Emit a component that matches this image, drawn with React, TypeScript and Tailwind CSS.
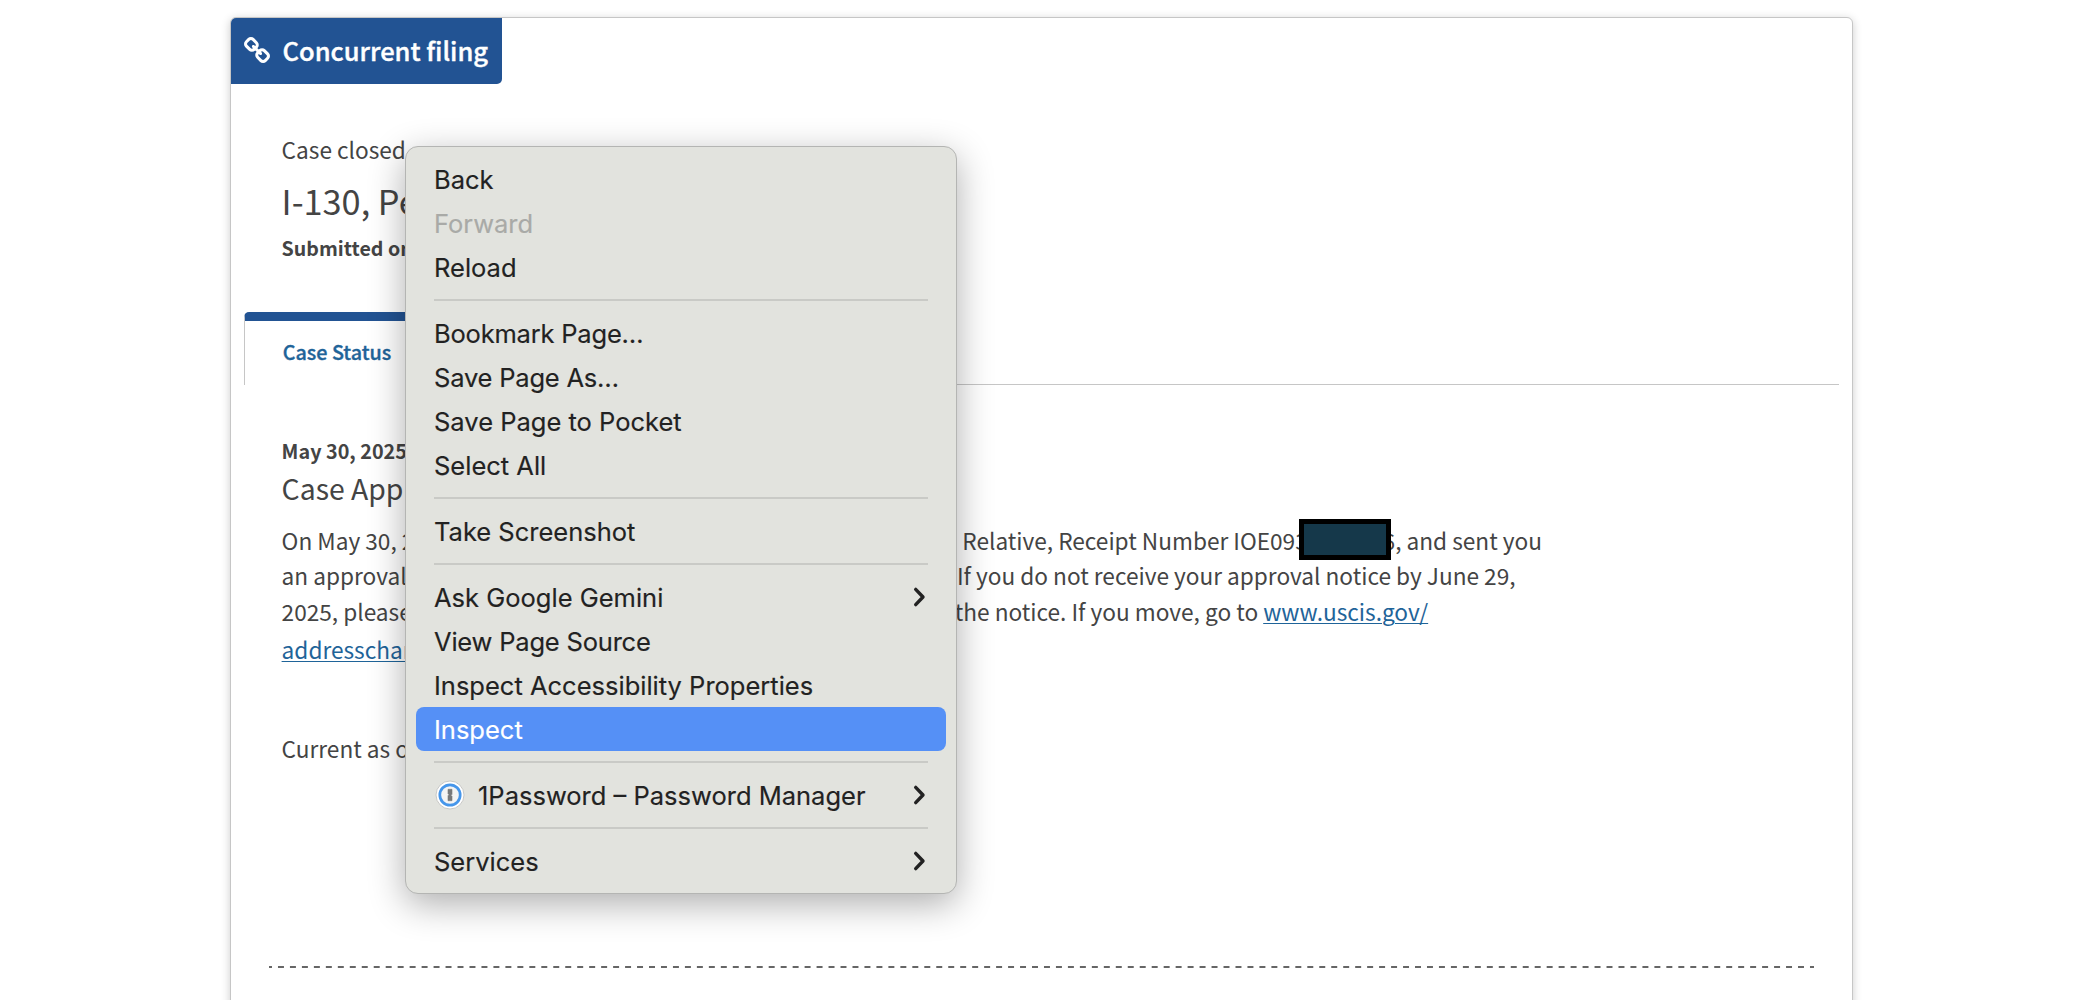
import React from "react";

type Item = {
  label: string;
  disabled?: boolean;
  active?: boolean;
  submenu?: boolean;
  icon?: boolean;
  tight?: boolean;
};

const groups: Item[][] = [
  [{ label: "Back" }, { label: "Forward", disabled: true }, { label: "Reload" }],
  [
    { label: "Bookmark Page…", tight: true },
    { label: "Save Page As…", tight: true },
    { label: "Save Page to Pocket" },
    { label: "Select All" },
  ],
  [{ label: "Take Screenshot" }],
  [
    { label: "Ask Google Gemini", submenu: true },
    { label: "View Page Source", tight: true },
    { label: "Inspect Accessibility Properties" },
    { label: "Inspect", active: true },
  ],
  [{ label: "1Password – Password Manager", submenu: true, icon: true }],
  [{ label: "Services", submenu: true }],
];

function LinkIcon() {
  return (
    <svg className="mb-[2px]" width="26" height="26" viewBox="16 16 1632 1632" fill="white">
      <path d="M1456 1216q0-40-28-68l-208-208q-28-28-68-28-42 0-72 32 3 3 19 18.5t21.5 21.5 15 19 13 25.5 3.5 27.5q0 40-28 68t-68 28q-15 0-27.5-3.5t-25.5-13-19-15-21.5-21.5-18.5-19q-33 31-33 73 0 40 28 68l206 207q27 27 68 27 40 0 68-26l147-146q28-28 28-67zm-703-705q0-40-28-68l-206-207q-28-28-68-28-39 0-68 27l-147 146q-28 28-28 67 0 40 28 68l208 208q27 27 68 27 42 0 72-31-3-3-19-18.5t-21.5-21.5-15-19-13-25.5-3.5-27.5q0-40 28-68t68-28q15 0 27.5 3.5t25.5 13 19 15 21.5 21.5 18.5 19q33-31 33-73zm895 705q0 120-85 203l-147 146q-83 83-203 83-121 0-204-85l-206-207q-83-83-83-203 0-123 88-209l-88-88q-86 88-208 88-120 0-204-84l-208-208q-84-84-84-204t85-203l147-146q83-83 203-83 121 0 204 85l206 207q83 83 83 203 0 123-88 209l88 88q86-88 208-88 120 0 204 84l208 208q84 84 84 204z" />
    </svg>
  );
}

function Chevron() {
  return (
    <svg width="14" height="22" viewBox="0 0 14 22" fill="none" stroke="#222" strokeWidth="3.4" strokeLinecap="round" strokeLinejoin="round">
      <path d="M2.7 3.4L10 11l-7.3 7.6" />
    </svg>
  );
}

function OnePassword() {
  return (
    <svg width="30" height="30" viewBox="0 0 30 30">
      <circle cx="15" cy="15" r="14" fill="#fff" stroke="#c2c2c0" strokeWidth="0.9" />
      <circle cx="15" cy="15" r="10.2" fill="#f4f4f4" stroke="#4696ea" strokeWidth="2.7" />
      <path d="M13 9.3h4v5l-1 1 1 1v4.4h-4v-5l1-1-1-1z" fill="#77787a" stroke="#77787a" strokeWidth="0.6" strokeLinejoin="round" />
    </svg>
  );
}

function Row({ item }: { item: Item }) {
  const tone = item.active
    ? "bg-[#5590f6] text-white"
    : item.disabled
      ? "text-[#a9aaa7]"
      : "text-[#222]";
  return (
    <div className={`flex h-11 items-center rounded-[8px] pr-[19px] pl-[18px] ${tone}`}>
      {item.icon && (
        <span className="mr-[13px] ml-px">
          <OnePassword />
        </span>
      )}
      <span className={`grow pt-[2px] leading-[44px] whitespace-nowrap ${item.tight ? "tracking-[-0.2px]" : ""}`}>
        {item.label}
      </span>
      {item.submenu && <Chevron />}
    </div>
  );
}

function ContextMenu() {
  return (
    <div className="absolute top-[146px] left-[405px] w-[552px] rounded-[13px] border border-[#b4b5b3] bg-[#e2e3de] px-[10px] py-[10px] font-['Inter',sans-serif] text-[25.5px] shadow-[0_10px_36px_rgba(0,0,0,0.32)] [-webkit-text-stroke:0.15px]">
      {groups.map((group, i) => (
        <React.Fragment key={i}>
          {i > 0 && (
            <div className="flex h-[22px] items-center px-[18px]">
              <div className="h-[2px] w-full bg-[#c9cac6]" />
            </div>
          )}
          {group.map((item) => (
            <Row key={item.label} item={item} />
          ))}
        </React.Fragment>
      ))}
    </div>
  );
}

export default function App() {
  return (
    <div className="relative h-[1000px] w-[2082px] overflow-hidden bg-white pt-[17px] pl-[230px] font-['Noto_Sans_CJK_SC',sans-serif] whitespace-nowrap text-[#444]">
      <main className="h-[1010px] w-[1623px] rounded-[6px] border border-[#c6c6c6] bg-white shadow-[0_2px_10px_rgba(0,0,0,0.2)]">
        <div className="flex h-[66px] w-[271px] items-center rounded-tl-[5px] rounded-br-[5px] bg-[#225393] pl-[12.5px] text-white">
          <LinkIcon />
          <span className="ml-[13px] pb-[3px] text-[25.5px] leading-[63px] font-medium [-webkit-text-stroke:0.4px]">
            Concurrent filing
          </span>
        </div>

        <section className="pl-[50.6px]">
          <p className="mt-12 text-[22.65px] leading-9">Case closed</p>
          <h2 className="mt-[7px] text-[34.3px] leading-[50px]">I-130, Petition</h2>
          <p className="mt-[7px] text-[19.6px] leading-8 font-bold">Submitted on</p>
        </section>

        <nav className="mt-12 mr-[13px] ml-[13px] flex h-[73px] items-end">
          <div className="h-full w-[184px] rounded-t-[5px] border-t-[9px] border-l border-t-[#225393] border-l-[#c6c6c6] pt-[15px] pl-[37.7px] text-[19.75px] leading-8 font-medium text-[#1f6499] [-webkit-text-stroke:0.35px]">
            Case Status
          </div>
          <div className="h-px grow bg-[#c6c6c6]" />
        </nav>

        <section className="pl-[50.6px] text-[22.65px] leading-9">
          <p className="mt-[50px] text-[19.8px] leading-8 font-bold">May 30, 2025</p>
          <h3 className="mt-px text-[28.35px] leading-10">Case Approved</h3>
          <div className="mt-[15px] flex h-[35px]">
            <span className="w-[680.7px]">On May 30, 2025,</span>
            <span className="relative w-[420.3px]">
              Relative, Receipt Number IOE093
              <span className="absolute top-[-4px] left-[336.7px] h-[41px] w-[92px] border-[5px] border-black bg-[#15384a]" />
            </span>
            <span>6, and sent you</span>
          </div>
          <div className="flex h-9">
            <span className="w-[675.4px]">an approval notice.</span>
            <span>If you do not receive your approval notice by June 29,</span>
          </div>
          <div className="flex h-[38px]">
            <span className="w-[300px]">2025, please</span>
            <span className="w-[681.6px] text-right whitespace-pre">the notice. If you move, go to </span>
            <a className="text-[#1f6499] underline decoration-1 underline-offset-[2px]">www.uscis.gov/</a>
          </div>
          <a className="block h-9 text-[#1f6499] underline decoration-1 underline-offset-[2px]">addresschange</a>
          <p className="mt-[63px]">Current as of</p>
        </section>

        <div className="mt-[199px] ml-[38px] h-[2px] w-[1545px] bg-[linear-gradient(90deg,#666_3px,transparent_3px,transparent_9px,#666_9px)] bg-[length:11.977px_2px]" />
      </main>
      <ContextMenu />
    </div>
  );
}
